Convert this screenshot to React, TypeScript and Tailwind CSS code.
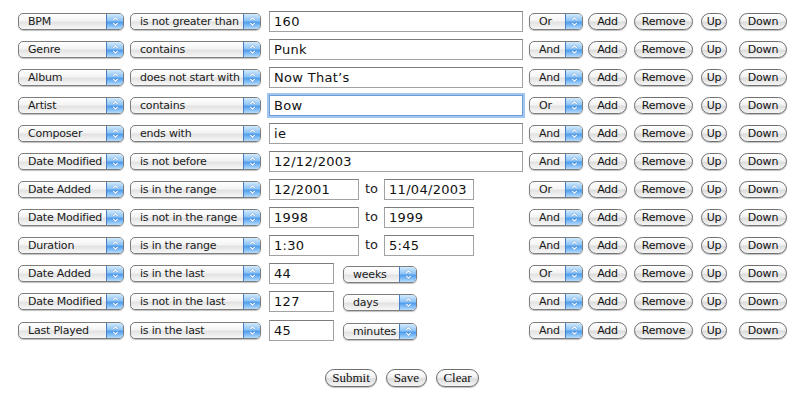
import React from 'react';

type Rule = {
  field: string;
  op: string;
  kind: 'text' | 'range' | 'last';
  a: string;
  b?: string;
  logic: 'Or' | 'And';
  focus?: boolean;
};

const rules: Rule[] = [
  { field: 'BPM', op: 'is not greater than', kind: 'text', a: '160', logic: 'Or' },
  { field: 'Genre', op: 'contains', kind: 'text', a: 'Punk', logic: 'And' },
  { field: 'Album', op: 'does not start with', kind: 'text', a: 'Now That\u2019s', logic: 'And' },
  { field: 'Artist', op: 'contains', kind: 'text', a: 'Bow', logic: 'Or', focus: true },
  { field: 'Composer', op: 'ends with', kind: 'text', a: 'ie', logic: 'And' },
  { field: 'Date Modified', op: 'is not before', kind: 'text', a: '12/12/2003', logic: 'And' },
  { field: 'Date Added', op: 'is in the range', kind: 'range', a: '12/2001', b: '11/04/2003', logic: 'Or' },
  { field: 'Date Modified', op: 'is not in the range', kind: 'range', a: '1998', b: '1999', logic: 'And' },
  { field: 'Duration', op: 'is in the range', kind: 'range', a: '1:30', b: '5:45', logic: 'And' },
  { field: 'Date Added', op: 'is in the last', kind: 'last', a: '44', b: 'weeks', logic: 'Or' },
  { field: 'Date Modified', op: 'is not in the last', kind: 'last', a: '127', b: 'days', logic: 'And' },
  { field: 'Last Played', op: 'is in the last', kind: 'last', a: '45', b: 'minutes', logic: 'And' },
];

// aqua popup menu
function Popup({ label, w }: { label: string; w: string }) {
  return (
    <div
      className={`${w} h-[17px] flex shrink-0 rounded-[5px] border border-[#7d7d7d] overflow-hidden shadow-[0_1px_1px_rgba(0,0,0,0.25)] bg-[linear-gradient(to_bottom,#ffffff_0%,#f4f4f4_45%,#e2e2e2_55%,#f7f7f7_100%)]`}
    >
      <div className="flex-1 pl-[9px] text-[11px] leading-[15px] text-[#1a1a1a] whitespace-nowrap overflow-hidden font-['DejaVu_Sans',sans-serif] tracking-[-0.2px]">
        {label}
      </div>
      <div className="w-[17px] border-l border-[#4a7fc4] flex items-center justify-center bg-[linear-gradient(to_bottom,#d3eafd_0%,#8cc4f6_45%,#4f9ced_55%,#b5defe_100%)]">
        <svg width="7" height="11" viewBox="0 0 7 11">
          <path d="M1.2 4.2 L3.5 1.8 L5.8 4.2 M1.2 6.8 L3.5 9.2 L5.8 6.8" fill="none" stroke="#24497f" strokeWidth="1.9" opacity="0.35" />
          <path d="M1.2 4.2 L3.5 1.8 L5.8 4.2 M1.2 6.8 L3.5 9.2 L5.8 6.8" fill="none" stroke="#ffffff" strokeWidth="1.1" />
        </svg>
      </div>
    </div>
  );
}

function Pill({ label, w, serif }: { label: string; w: string; serif?: boolean }) {
  return (
    <div
      className={`${w} ${serif ? "h-[18px] text-[13px] font-['Liberation_Serif',serif] leading-[16px]" : "h-[17px] text-[11px] font-['DejaVu_Sans',sans-serif] leading-[15px] tracking-[-0.2px]"} shrink-0 flex justify-center rounded-full border border-[#6f6f6f] text-[#111] shadow-[0_1px_1px_rgba(0,0,0,0.25)] bg-[linear-gradient(to_bottom,#ffffff_0%,#f2f2f2_45%,#dcdcdc_55%,#f6f6f6_100%)]`}
    >
      {label}
    </div>
  );
}

function Field({ value, w, focus }: { value: string; w: string; focus?: boolean }) {
  return (
    <div
      className={`${w} h-[21px] shrink-0 bg-white border ${focus ? 'border-[#6f9bd6] shadow-[0_0_0_2px_#a3c6ee]' : 'border-[#a2a2a2] border-t-[#7c7c7c]'} pl-[4px] text-[13px] leading-[19px] text-[#111] font-['DejaVu_Sans',sans-serif] tracking-[0.3px]`}
    >
      {value}
    </div>
  );
}

export default function App() {
  return (
    <div className="w-[808px] h-[405px] bg-white pt-[7px] pl-[18px]">
      {rules.map((r, i) => (
        <div key={i} className={`flex items-center ${i >= 10 ? 'h-[29px]' : 'h-[28px]'}`}>
          <Popup label={r.field} w="w-[106px]" />
          <div className="w-[6px]" />
          <Popup label={r.op} w="w-[131px]" />
          <div className="w-[8px]" />
          <div className="w-[254px] flex items-center shrink-0">
            {r.kind === 'text' && <Field value={r.a} w="w-[254px]" focus={r.focus} />}
            {r.kind === 'range' && (
              <>
                <Field value={r.a} w="w-[90px]" />
                <span className="w-[25px] text-center text-[13px] text-[#222] font-['DejaVu_Sans',sans-serif]">to</span>
                <Field value={r.b!} w="w-[90px]" />
              </>
            )}
            {r.kind === 'last' && (
              <>
                <Field value={r.a} w="w-[65px]" />
                <div className="w-[9px]" />
                <div className="mt-[2px]">
                  <Popup label={r.b!} w="w-[74px]" />
                </div>
              </>
            )}
          </div>
          <div className="w-[6px]" />
          <Popup label={r.logic} w="w-[54px]" />
          <div className="ml-[5px] flex items-center gap-[7px]">
            <Pill label="Add" w="w-[39px]" />
            <Pill label="Remove" w="w-[59px]" />
            <div className="flex items-center gap-[12px] ml-[1px]">
              <Pill label="Up" w="w-[26px]" />
              <Pill label="Down" w="w-[48px]" />
            </div>
          </div>
        </div>
      ))}
      <div className="flex gap-[9px] mt-[24px] ml-[307px]">
        <Pill label="Submit" w="w-[52px]" serif />
        <Pill label="Save" w="w-[41px]" serif />
        <Pill label="Clear" w="w-[43px]" serif />
      </div>
    </div>
  );
}
